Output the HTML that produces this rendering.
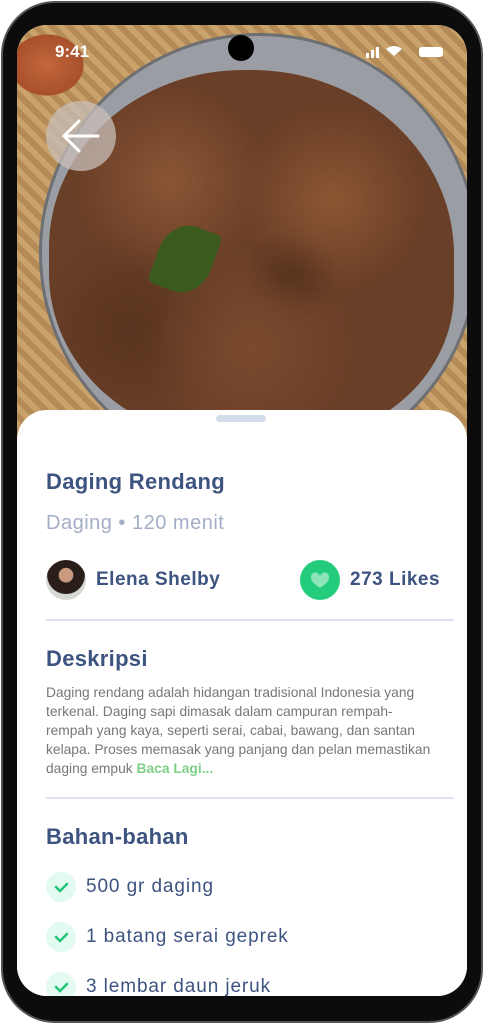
<!DOCTYPE html>
<html><head><meta charset="utf-8"><style>
*{margin:0;padding:0;box-sizing:border-box}
body{width:484px;height:1024px;background:#fff;position:relative;overflow:hidden;font-family:"Liberation Sans",sans-serif}
.frame{position:absolute;left:1px;top:1px;width:482px;height:1022px;background:#0c0c0c;border-radius:54px;border:2px solid #555}
.screen{position:absolute;left:17px;top:25px;width:450px;height:971px;border-radius:30px;overflow:hidden;background:#fff}
.photo{position:absolute;left:0;top:0;width:450px;height:420px;background:
radial-gradient(ellipse 60px 50px at 30px 40px,#c2663c 0,#a8502c 60%,transparent 62%),
repeating-linear-gradient(45deg,#c9a26c 0 6px,#b48a56 6px 12px);}
.plate{position:absolute;left:22px;top:8px;width:440px;height:440px;border-radius:50%;background:#9a9ea4;border:3px solid #6d6f72}
.meat{position:absolute;left:32px;top:45px;width:405px;height:370px;border-radius:48% 50% 40% 45%;background:
radial-gradient(circle at 30% 30%,#8a5535 0,transparent 25%),
radial-gradient(circle at 70% 35%,#8c5633 0,transparent 25%),
radial-gradient(circle at 50% 75%,#7a4a2e 0,transparent 30%),
radial-gradient(circle at 20% 70%,#5a3420 0,transparent 25%),
radial-gradient(circle at 60% 55%,#4a2a18 0,transparent 15%),#6a3f27}
.leaf{position:absolute;left:140px;top:200px;width:56px;height:68px;background:#3b5a1e;border-radius:50% 10% 50% 10%;transform:rotate(20deg)}
.back{position:absolute;left:29px;top:76px;width:70px;height:70px;border-radius:50%;background:rgba(200,190,185,.75)}
.cam{position:absolute;left:211px;top:10px;width:26px;height:26px;border-radius:50%;background:#000}
.time{position:absolute;left:38px;top:17px;color:#fff;font-size:17px;font-weight:bold}
.sheet{position:absolute;left:0;top:385px;width:450px;height:600px;background:#fff;border-radius:30px 30px 0 0}
.handle{position:absolute;left:199px;top:390px;width:50px;height:7px;border-radius:4px;background:#d3dce8}
.t{position:absolute;left:29px;color:#3d5380;font-weight:bold;white-space:nowrap}
.hr{position:absolute;left:29px;width:408px;height:2px;background:#dde3ee}
.p{position:absolute;left:29px;top:658px;font-size:13.8px;line-height:19px;color:#777;white-space:nowrap}
.chk{position:absolute;left:29px;width:30px;height:30px;border-radius:50%;background:#e3faf0}
.item{position:absolute;left:69px;font-size:19px;letter-spacing:.9px;color:#3d5380;white-space:nowrap}
</style></head><body>
<div class="frame"></div>
<div class="screen">
 <div class="photo"><div class="plate"></div><div class="meat"></div><div class="leaf"></div>
  <div class="back"><svg width="70" height="70" viewBox="0 0 70 70"><path d="M18 35h34M33 20L18 35l15 15" stroke="#fff" stroke-width="3" fill="none" stroke-linecap="round"/></svg></div>
  <div class="cam"></div><div class="time">9:41</div>
  <svg style="position:absolute;left:347px;top:18px" width="90" height="16"><rect x="2" y="10" width="3" height="5" fill="#fff"/><rect x="7" y="7" width="3" height="8" fill="#fff"/><rect x="12" y="4" width="3" height="11" fill="#fff"/><path d="M30 13l-8-7a12 12 0 0 1 16 0z" fill="#fff"/><rect x="55" y="4" width="24" height="10" rx="3" fill="#fff"/></svg>
 </div>
 <div class="sheet"></div><div class="handle"></div>
 <div class="t" style="top:444px;font-size:22px;letter-spacing:.3px">Daging Rendang</div>
 <div class="t" style="top:487px;font-size:20px;letter-spacing:.5px;font-weight:normal;color:#a3adc6">Daging • 120 menit</div>
 <div style="position:absolute;left:29px;top:535px;width:40px;height:40px;border-radius:50%;background:radial-gradient(circle at 50% 38%,#c99a80 0,#c99a80 22%,#2a1e1a 24%,#2a1e1a 58%,#d6d8d4 60%)"></div>
 <div class="t" style="top:544px;font-size:19px;letter-spacing:.5px;left:79px">Elena Shelby</div>
 <div style="position:absolute;left:283px;top:535px;width:40px;height:40px;border-radius:50%;background:#22cc7a"><svg width="40" height="40" viewBox="0 0 40 40"><path d="M20 28c-6-4-9-7-9-10.5a4.5 4.5 0 0 1 9-1 4.5 4.5 0 0 1 9 1C29 21 26 24 20 28z" fill="#8de6bb"/></svg></div>
 <div class="t" style="top:544px;font-size:19px;letter-spacing:.5px;left:333px">273 Likes</div>
 <div class="hr" style="top:594px"></div>
 <div class="t" style="top:621px;font-size:22px;letter-spacing:.3px">Deskripsi</div>
 <div class="p">Daging rendang adalah hidangan tradisional Indonesia yang<br>terkenal. Daging sapi dimasak dalam campuran rempah-<br>rempah yang kaya, seperti serai, cabai, bawang, dan santan<br>kelapa. Proses memasak yang panjang dan pelan memastikan<br>daging empuk <b style="color:#7fcf86">Baca Lagi...</b></div>
 <div class="hr" style="top:772px"></div>
 <div class="t" style="top:799px;font-size:22px;letter-spacing:.3px">Bahan-bahan</div>
 <div class="chk" style="top:847px"><svg width="30" height="30"><path d="M10 15l4 4 7-7" stroke="#1fc477" stroke-width="2.5" fill="none" stroke-linecap="round"/></svg></div>
 <div class="item" style="top:851px">500 gr daging</div>
 <div class="chk" style="top:897px"><svg width="30" height="30"><path d="M10 15l4 4 7-7" stroke="#1fc477" stroke-width="2.5" fill="none" stroke-linecap="round"/></svg></div>
 <div class="item" style="top:901px">1 batang serai geprek</div>
 <div class="chk" style="top:947px"><svg width="30" height="30"><path d="M10 15l4 4 7-7" stroke="#1fc477" stroke-width="2.5" fill="none" stroke-linecap="round"/></svg></div>
 <div class="item" style="top:951px">3 lembar daun jeruk</div>
</div>
</body></html>
